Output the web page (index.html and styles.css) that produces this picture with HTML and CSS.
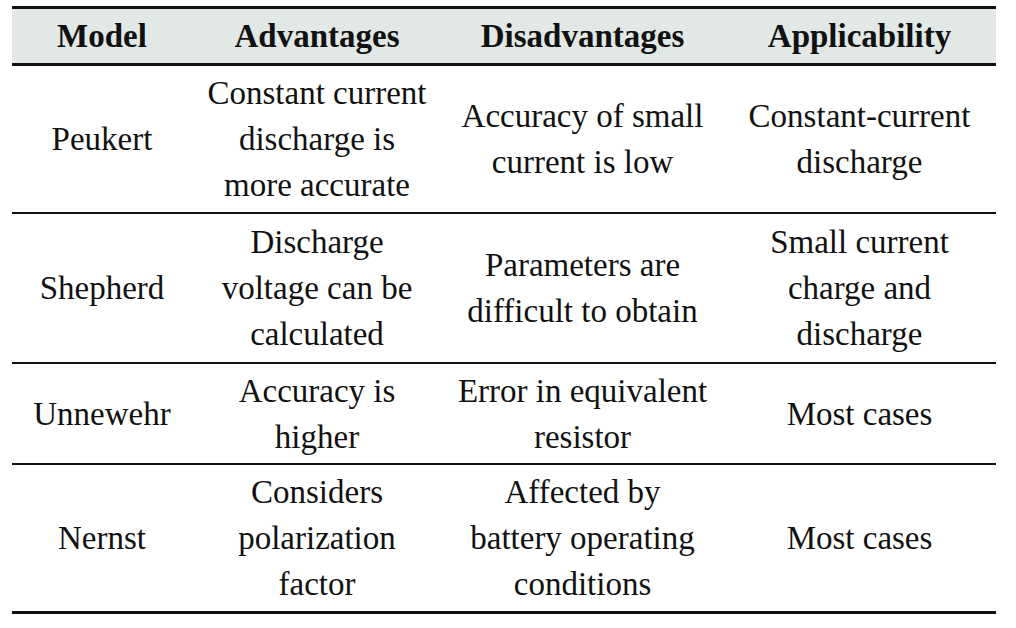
FILE: index.html
```html
<!DOCTYPE html>
<html>
<head>
<meta charset="utf-8">
<link rel="stylesheet" href="styles.css">
</head>
<body>
<table class="cmp">
  <colgroup>
    <col class="c1"><col class="c2"><col class="c3"><col class="c4">
  </colgroup>
  <thead>
    <tr class="head"><th>Model</th><th>Advantages</th><th>Disadvantages</th><th>Applicability</th></tr>
  </thead>
  <tbody>
    <tr class="r1"><td>Peukert</td><td>Constant current<br>discharge is<br>more accurate</td><td>Accuracy of small<br>current is low</td><td>Constant-current<br>discharge</td></tr>
    <tr class="r2"><td>Shepherd</td><td>Discharge<br>voltage can be<br>calculated</td><td>Parameters are<br>difficult to obtain</td><td>Small current<br>charge and<br>discharge</td></tr>
    <tr class="r3"><td>Unnewehr</td><td>Accuracy is<br>higher</td><td>Error in equivalent<br>resistor</td><td>Most cases</td></tr>
    <tr class="r4 last"><td>Nernst</td><td>Considers<br>polarization<br>factor</td><td>Affected by<br>battery operating<br>conditions</td><td>Most cases</td></tr>
  </tbody>
</table>
</body>
</html>
```
FILE: styles.css
```css
html, body {
  margin: 0;
  padding: 0;
  background: #ffffff;
}
body {
  padding: 6px 0 0 12px;
  font-family: "Liberation Serif", "Times New Roman", serif;
  color: #111111;
}
.cmp {
  border-collapse: collapse;
  width: 984px;
  table-layout: fixed;
  font-size: 33px;
  line-height: 46px;
}
.c1 { width: 180px; }
.c2 { width: 250px; }
.c3 { width: 281px; }
.c4 { width: 273px; }
.cmp th, .cmp td {
  padding: 0;
  text-align: center;
  vertical-align: middle;
  white-space: nowrap;
}
.head th {
  background: #e1e8e5;
  font-weight: bold;
  height: 54px;
  border-top: 3px solid #111111;
  border-bottom: 3px solid #111111;
}
.cmp tbody tr td { border-bottom: 2px solid #111111; }
.cmp tbody tr.last td { border-bottom: 3px solid #111111; }
.r1 td { height: 146px; }
.r2 td { height: 148px; }
.r3 td { height: 99px; }
.r4 td { height: 146px; }
```
